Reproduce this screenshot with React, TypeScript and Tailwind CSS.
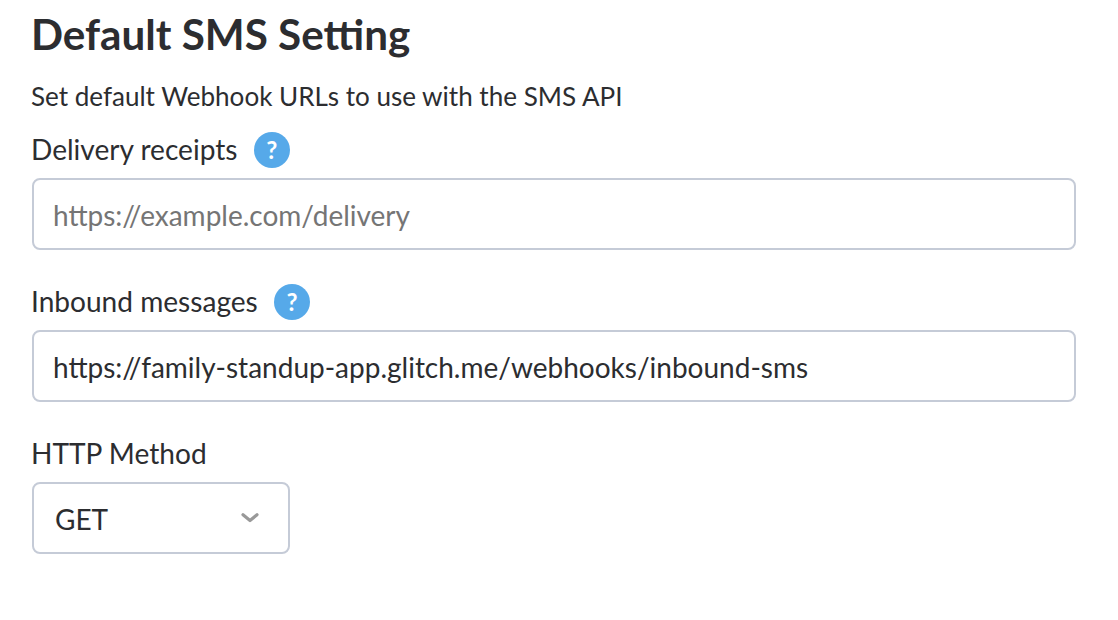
import React from "react";

function Help() {
  return (
    <button type="button" aria-label="Help" className="-my-px ml-[15.75px] flex size-[36.5px] shrink-0 items-center justify-center rounded-full bg-[#56a9e9] text-[24px] leading-none font-bold text-white">
      ?
    </button>
  );
}

function Field({ label, value, placeholder }: { label: string; value?: string; placeholder?: string }) {
  return (
    <div className="mb-[34px]">
      <div className="mb-[10px] flex h-9 items-center">
        <label className="-ml-px pr-[0.4px] pb-[2px] text-[28.08px] leading-9">{label}</label>
        <Help />
      </div>
      <input
        defaultValue={value}
        placeholder={placeholder}
        className="block h-[72px] w-[1044px] rounded-lg border-2 border-[#c5cbd7] bg-white px-[19px] pt-[2px] text-[28px] text-[#2c2d30] outline-none placeholder:text-[#757575]"
      />
    </div>
  );
}

export default function App() {
  return (
    <main className="h-[620px] overflow-hidden bg-white pl-8 font-['Lato',sans-serif] text-[#2c2d30]">
      <h1 className="-ml-px pt-[9px] text-[42.2px] leading-[50px] font-bold">Default SMS Setting</h1>
      <p className="mt-[19px] mb-[18px] -ml-px text-[26.05px] leading-9">Set default Webhook URLs to use with the SMS API</p>
      <Field label="Delivery receipts" placeholder="https://example.com/delivery" />
      <Field label="Inbound messages" value="https://family-standup-app.glitch.me/webhooks/inbound-sms" />
      <div className="-mt-px mb-[11px] -ml-px text-[28.08px] leading-9">HTTP Method</div>
      <button type="button" className="flex h-[72px] w-[258px] items-center justify-between rounded-lg border-2 border-[#c5cbd7] pr-7 pl-[21px] text-[28px]">
        <span className="pt-[2px]">GET</span>
        <svg width="20" height="12" viewBox="0 0 20 12" fill="none" stroke="#999" strokeWidth="3.2" strokeLinecap="round" strokeLinejoin="round">
          <path d="M3 2.8l7 5.7 7-5.7" />
        </svg>
      </button>
    </main>
  );
}
